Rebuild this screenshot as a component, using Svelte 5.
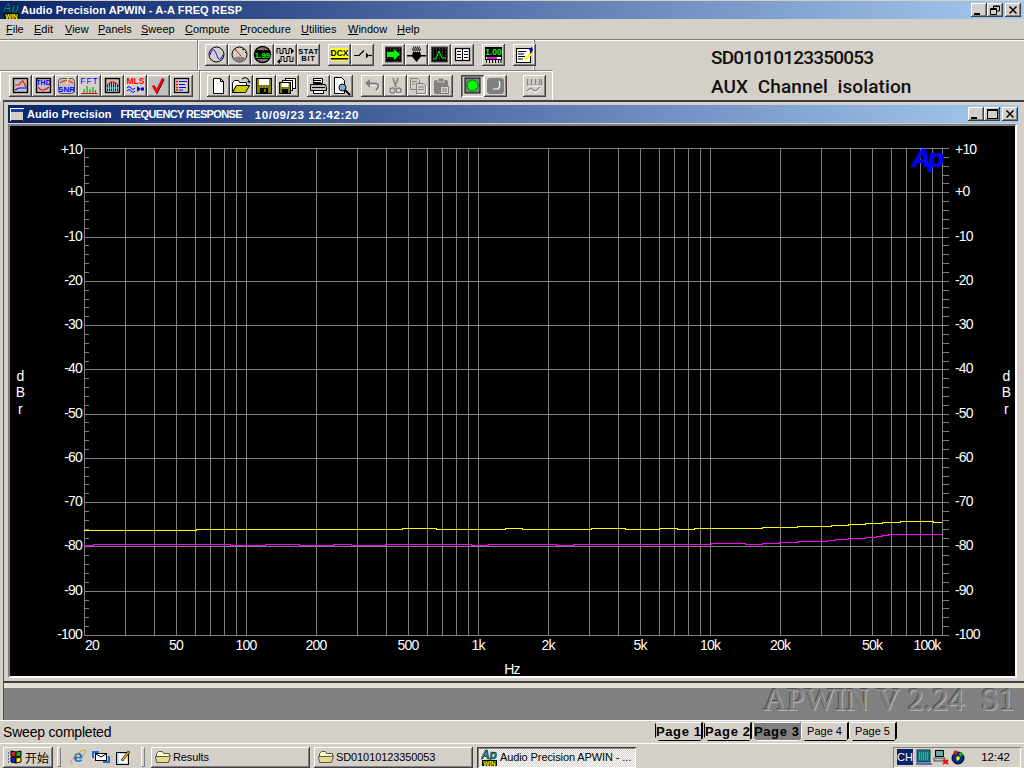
<script lang="ts">
  const menus = ["File", "Edit", "View", "Panels", "Sweep", "Compute", "Procedure", "Utilities", "Window", "Help"];

  const ln = (d: string, c = "#000", w = 1) => `<path d="${d}" fill="none" stroke="${c}" stroke-width="${w}"/>`;
  const fl = (d: string, c: string) => `<path d="${d}" fill="${c}"/>`;
  const tx = (s: string, x: number, y: number, c: string, size = 8, weight = "bold", extra = "") =>
    `<text x="${x}" y="${y}" fill="${c}" font-size="${size}" font-weight="${weight}" font-family="Liberation Sans" text-anchor="middle" ${extra}>${s}</text>`;
  const box = `<rect x="4.5" y="3.5" width="14" height="14" fill="#c0c0c0" stroke="#000" stroke-width="1.4"/>`;
  const darkDots = `<rect x="3.5" y="3" width="16" height="15" fill="#000" stroke="#555"/>` +
    `<path d="M5 5h13M5 8h13M5 11h13M5 14h13" stroke="#777" stroke-dasharray="1 2"/>`;

  const icons: Record<string, string> = {
    sine: `<circle cx="11.5" cy="10.5" r="7.5" fill="none" stroke="#000"/>` + ln("M5 11c2-7 4-7 6.5-.5s4 6.5 6.5 0", "#00f"),
    meter: `<circle cx="11.5" cy="10.5" r="7.5" fill="#d4d0c8" stroke="#000"/>` +
      fl("M5 14q6.5-3 13 0l-2 3q-4.500 2-9 0z", "#808080") + ln("M7 5l6 7", "#f00") + ln("M14 5l2 1M17 8l1 1", "#000"),
    dbm: `<ellipse cx="11.500" cy="10.5" rx="8" ry="8" fill="#808080" stroke="#000" stroke-width="1.500"/>` +
      `<rect x="4" y="6" width="15" height="9" fill="#000"/>` + tx("1.99", 11.5, 13.500, "#0f0", 8) + ln("M15 3l-3 4M9 15l-1 3", "#f00"),
    waves: ln("M3 9.500V4.500h3v5h3v-5h3v5h3v-5h2", "#000") + fl("M17 4l3 3-3 3z", "#000") + ln("M19 12.500v5h-3v-5h-3v5h-3v-5H7v5H5") + fl("M6 15l-3 2.500 3 2.500z", "#000"),
    stat: tx("STAT", 11.5, 9.500, "#000", 7.500, "bold", `letter-spacing=".5"`) + tx("BIT", 11.5, 17, "#000", 7.500, "bold", `letter-spacing=".8"`),
    dcx: `<rect x="3" y="4" width="17" height="13" fill="#ff0"/><path d="M3 5h17M3 7h17M3 9h17M3 11h17M3 13h17" stroke="#fff" stroke-dasharray="1 1"/>` +
      tx("DCX", 11.5, 12, "#000", 8.500) + `<rect x="3" y="14" width="17" height="1.500" fill="#000"/>`,
    switch: ln("M3 11.500h5l5-5", "#000", 1.200) + fl("M15 8.500l3 3-3 3z", "#000") + ln("M18 11.500h3", "#000", 1.200),
    arrow: darkDots + fl("M5 8h7V5l6 5.500-6 5.500v-3H5z", "#0f0"),
    funnel: `<path d="M8 3h7v2H8zM7 5h9v2H7z" fill="#808080"/><path d="M8 3h7M7 5h9M8 7h7" stroke="#000" stroke-dasharray="1 1"/>` +
      fl("M8 8h7l1 3h5v1.500h-5L11.500 18 7 12.500H2V11h5z", "#000"),
    scope: darkDots + ln("M5 15h3l3-8 3 7h4", "#0f0"),
    table: `<rect x="4.500" y="4.500" width="14" height="12" fill="#fff" stroke="#000" stroke-width="1.300"/>` +
      ln("M11.500 5v11M6 7.500h4M6 10.500h4M6 13.500h4M13 7.500h4M13 10.500h4M13 13.500h4"),
    level: `<rect x="3" y="3" width="17" height="9" fill="#000"/>` + tx("1.00", 11.5, 10.500, "#0f0", 8.500) +
      `<rect x="3.500" y="12.500" width="16" height="3" fill="#fff" stroke="#000"/><rect x="5" y="13" width="10" height="2" fill="#f0f"/>` +
      ln("M4.500 16v3M7.500 16v3M10.500 16v3M13.500 16v3M16.500 16v3M19 16v3"),
    notes: `<rect x="3.500" y="4.500" width="14" height="14" fill="#fff" stroke="#000"/>` + ln("M5 7.500h8M5 10h6M5 12.500h7M5 15h5") +
      fl("M11 15l6-6 2 2-6 5z", "#ff0") + fl("M16 5l3-2 1 3-2 3z", "#00a"),
    response: box + ln("M6 10h4l3-4h1l3 6", "#f00", 1.200) + ln("M6 15l4-2h8", "#00f", 1.200),
    thd: box + tx("THD", 11.5, 10, "#00f", 7) + ln("M6 12q2 3 5 3t6-3", "#f00", 1.200),
    snr: `<rect x="3.500" y="3.500" width="16" height="15" rx="3" fill="#c0c0c0" stroke="#555"/>` + ln("M5 8q6-5 13 0", "#f00") + ln("M13 3l-1 6", "#ff0", 1.500) + tx("SNR", 11.5, 17, "#00f", 8),
    fft: tx("FFT", 11.5, 9, "#00f", 8.500, "normal", `letter-spacing="1"`) + ln("M6 18v-4M9 18v-7M12 18v-4M15 18v-6M17.500 18v-3", "#0a0", 1.200) + ln("M3 18.500h17", "#f00"),
    bars: box + ln("M6.500 16v-6M8.500 16V8M10.500 16V7M12.500 16V7M14.500 16V8M16.500 16v-6", "#00f") + ln("M5 11q6-9 13 0", "#f00") + ln("M5 13h13", "#0ff"),
    mls: tx("MLS", 11.5, 9, "#f00", 8.500) + ln("M3 13q2-3 4 0t4 0M3 16q2-3 4 0t4 0", "#00f") + fl("M13 11l4 3-4 3z", "#00f") + `<rect x="17" y="12.500" width="3" height="3" fill="#00f"/>`,
    check: `<rect x="2" y="2" width="19" height="18" fill="#c0c0c0"/>` + ln("M6.500 11l3.500 6L16.500 4", "#000", 2.400) + ln("M6 10.500l3.500 6L16 3.500", "#f00", 2.400),
    list: `<rect x="4.500" y="3.500" width="14" height="14" fill="#d4d0c8" stroke="#000" stroke-width="1.300"/>` +
      ln("M6 6.500h2M6 9.500h2M6 12.500h2M6 15h2", "#f00", 1.400) + ln("M9 6.500h8M9 9.500h6M9 12.500h7M9 15h4", "#00f", 1.200),
    doc: `<path d="M6.500 3.500h7l3 3v12h-10z" fill="#fff" stroke="#000"/>` + ln("M13.500 3.500v3h3"),
    open: `<path d="M2.500 7.500l2-2h4l1 2h7v3h-10l-4 7z" fill="#fff" stroke="#000"/>` + `<path d="M6.500 10.500h13l-4 7H2.500z" fill="#cc0" stroke="#000"/>` +
      ln("M12 4q3-3 6 0l1 2") + fl("M17 6h3.500l-1 2.500z", "#000"),
    save: `<rect x="3.500" y="3.500" width="15" height="15" fill="#808000" stroke="#000"/><rect x="6" y="4" width="10" height="6" fill="#fff"/><rect x="7" y="13" width="8" height="5" fill="#000"/><rect x="11" y="14" width="2" height="3" fill="#808000"/>`,
    saveall: `<rect x="9.500" y="3.500" width="10" height="10" fill="#fff" stroke="#000"/><rect x="6.500" y="5.500" width="10" height="10" fill="#fff" stroke="#000"/>` +
      `<rect x="3.500" y="7.500" width="11" height="11" fill="#808000" stroke="#000"/><rect x="5.500" y="8" width="7" height="4" fill="#fff"/><rect x="6" y="14" width="6" height="4" fill="#000"/>`,
    print: `<path d="M6.500 3.500h9v5h-9z" fill="#fff" stroke="#000"/><path d="M3.500 9.500h15l1 3v3h-16z" fill="#c0c0c0" stroke="#000"/>` + ln("M5 12.500h13M7 5.500h7M7 7.500h7") +
      `<path d="M6.500 15.500h10v3h-10z" fill="#fff" stroke="#000"/>`,
    preview: `<path d="M4.500 2.500h7l3 3v13h-10z" fill="#fff" stroke="#000"/>` + `<circle cx="12.500" cy="12.500" r="3.500" fill="#8ac" stroke="#000"/>` + ln("M15 15l5 5", "#000", 2),
    undo: ln("M7.500 9.500h7q4 0 3 4l-2 3", "#fff", 2) + ln("M7 8.500h7q4 0 3 4l-2 3", "#808080", 2) + fl("M9 4v9L4 8z", "#808080"),
    cut: ln("M9 3l3 9M14 3l-3 9", "#808080", 1.500) + `<circle cx="8.500" cy="15.500" r="2.500" fill="none" stroke="#808080" stroke-width="1.300"/><circle cx="14.500" cy="15.500" r="2.500" fill="none" stroke="#808080" stroke-width="1.300"/>` + ln("M11 19h7", "#fff"),
    copy: `<path d="M3.500 3.500h7l2 2v9h-9z" fill="#d4d0c8" stroke="#808080"/><path d="M9.500 8.500h7l2 2v8h-9z" fill="#d4d0c8" stroke="#808080"/>` + ln("M5 6.500h5M5 9h3M11 12h6M11 14.500h6", "#808080") + ln("M19.500 11v8.500H11", "#fff"),
    paste: `<rect x="4" y="5" width="14" height="14" rx="2" fill="#808080"/><rect x="8" y="3" width="6" height="4" fill="#808080" stroke="#fff" stroke-width=".6"/>` +
      `<rect x="10.500" y="11.500" width="8" height="7" fill="#d4d0c8" stroke="#808080"/>` + ln("M12 14h5M12 16h5", "#808080"),
    lamp: `<rect x="4" y="3" width="15" height="15" fill="#808080" stroke="#000"/><circle cx="11.500" cy="10.500" r="5.500" fill="#0f0" stroke="#063"/>`,
    dark: `<rect x="3" y="3" width="17" height="16" rx="3" fill="#808080"/>` + ln("M15 6q2 5-1 8H9", "#fff", 1.200),
    chart: ln("M4.500 4v6h14V4M8.500 4v5M12.500 4v5M16.500 4v5", "#808080", 1.200) + ln("M4 16l4-3 3 3 3-1 4-4", "#808080", 1.200) + ln("M4 17.500l4-3 3 3 3-1 4-4M5 11h14", "#fff"),
  };

  const rowOne = [["sine", "meter", "dbm", "waves", "stat"], ["dcx", "switch"], ["arrow", "funnel", "scope", "table"], ["level"], ["notes"]];
  const rowTwoA = ["response", "thd", "snr", "fft", "bars", "mls", "check", "list"];
  const rowTwoB = [["doc", "open", "save", "saveall"], ["print", "preview"], ["undo", "cut", "copy", "paste"], ["lamp", "dark"]];
  const pressed = ["lamp"];

  const pages = [
    { label: "Page 1", bold: true },
    { label: "Page 2", bold: true },
    { label: "Page 3", bold: true, current: true },
    { label: "Page 4" },
    { label: "Page 5" },
  ];

  // plot scale
  const yAt = (i: number) => Math.round(148 + (i * 487) / 11) + 0.5;
  const xAt = (f: number) => Math.round(84 + 232 * Math.log10(f / 20)) + 0.5;

  const freqs: number[] = [];
  for (const d of [10, 100, 1000, 10000]) for (let m = 1; m < 10; m++) if (d * m >= 20) freqs.push(d * m);
  freqs.push(100000);

  const yLabels = ["+10", "+0", "-10", "-20", "-30", "-40", "-50", "-60", "-70", "-80", "-90", "-100"];
  const xLabels = [
    ["20", 92], ["50", 176], ["100", 246], ["200", 316], ["500", 408], ["1k", 478],
    ["2k", 548], ["5k", 640], ["10k", 710], ["20k", 780], ["50k", 872], ["100k", 927],
  ];

  const minor: number[] = [];
  for (let i = 0; i < 11; i++) for (let j = 1; j < 5; j++) minor.push(Math.round(148 + ((i + j / 5) * 487) / 11) + 0.5);

  function steps(pts: number[][]) {
    let d = `M84 ${pts[0][1] + 0.5}`;
    for (const [x, y] of pts) d += `V${y + 0.5}H${x}`;
    return d;
  }

  const yellow = steps([
    [196, 530], [402, 529], [436, 528], [505, 529], [522, 528], [591, 529], [625, 528], [659, 529],
    [677, 528], [694, 529], [762, 528], [797, 527], [831, 526], [848, 525], [865, 524], [882, 523],
    [900, 522], [933, 521], [942, 522],
  ]);
  const magenta = steps([
    [93, 545], [230, 544], [265, 545], [299, 544], [333, 545], [351, 544], [385, 545], [471, 544],
    [488, 545], [556, 544], [573, 545], [711, 544], [745, 543], [762, 544], [779, 543], [797, 542],
    [827, 541], [835, 540], [848, 539], [865, 538], [876, 537], [882, 536], [888, 535], [942, 534],
  ]);
</script>

{#snippet tool(name)}
  <div class="tbtn" class:pressed={pressed.includes(name)}>
    <svg viewBox="0 0 23 22" width="23" height="22">{@html icons[name]}</svg>
  </div>
{/snippet}

{#snippet logo()}
  <svg class="logo" viewBox="0 0 17 17" width="17" height="17">
    <text x="0" y="10" font-size="12" font-style="italic" font-weight="bold" font-family="Liberation Sans" fill="#0a8f8f" stroke="#000" stroke-width=".4">Ap</text>
    <rect x="1" y="11" width="15" height="6" fill="#000" />
    <text x="8.500" y="16.500" font-size="6.500" font-weight="bold" font-family="Liberation Sans" fill="#ff0" text-anchor="middle">WIN</text>
  </svg>
{/snippet}

{#snippet folder()}
  <svg viewBox="0 0 16 14" width="16" height="14">
    <path d="M1.500 3.500l2-2h4l1 2h6v3h-13z" fill="#ffc" stroke="#555" />
    <path d="M.5 6.500h12l3-1-2 7H1.500z" fill="#e8d98a" stroke="#555" />
  </svg>
{/snippet}

<div class="desktop">
  <header class="titlebar">
    {@render logo()}
    <span class="title">Audio Precision APWIN - A-A FREQ RESP</span>
    <div class="caption-btns">
      <div class="cbtn"><i class="min"></i></div>
      <div class="cbtn"><svg viewBox="0 0 10 10" width="10" height="10"><path d="M3.500 3V1h6v5H7M.5 3.500h6v6h-6zM.5 4.500h6M3.500 1.500h6" fill="none" stroke="#000" /></svg></div>
      <div class="cbtn close"><svg viewBox="0 0 10 10" width="10" height="10"><path d="M1.500 1.500l7 7M8.500 1.500l-7 7" stroke="#000" stroke-width="1.500" /></svg></div>
    </div>
  </header>

  <nav class="menubar">
    {#each menus as m}
      <span><u>{m[0]}</u>{m.slice(1)}</span>
    {/each}
  </nav>

  <section class="toolbars">
    <div class="bands">
      <div class="row">
        <div class="empty-band"></div>
        <div class="band first">
          {#each rowOne as group}
            <div class="group">{#each group as name}{@render tool(name)}{/each}</div>
          {/each}
        </div>
      </div>
      <div class="row second">
        <div class="band left">
          <div class="group">{#each rowTwoA as name}{@render tool(name)}{/each}</div>
        </div>
        <div class="band right">
          {#each rowTwoB as group}
            <div class="group">{#each group as name}{@render tool(name)}{/each}</div>
          {/each}
          <div class="group last">{@render tool("chart")}</div>
        </div>
      </div>
    </div>
    <div class="caption">
      <div class="serial">SD01010123350053</div>
      <div>AUX&nbsp; Channel&nbsp; isolation</div>
    </div>
  </section>

  <main class="mdi">
    <div class="child">
      <div class="child-title">
        <svg viewBox="0 0 14 13" width="14" height="13"><rect x=".5" y=".5" width="13" height="12" fill="#d4d0c8" stroke="#fff" /><rect x="1" y="1" width="12" height="3" fill="#1a3fa0" /><path d="M13.500 1v11.500H1" fill="none" stroke="#222" /></svg>
        <span class="t1">Audio Precision</span>
        <span class="t2">FREQUENCY RESPONSE</span>
        <span class="t3">10/09/23 12:42:20</span>
        <div class="child-btns">
          <div class="cbtn"><i class="min"></i></div>
          <div class="cbtn"><i class="max"></i></div>
          <div class="cbtn close"><svg viewBox="0 0 10 10" width="10" height="10"><path d="M1.500 1.500l7 7M8.500 1.500l-7 7" stroke="#000" stroke-width="1.500" /></svg></div>
        </div>
      </div>
      <div class="client">
        <svg class="plot" viewBox="10 126 1005 550" width="1005" height="550">
          <rect x="10" y="126" width="1005" height="550" fill="#000" />
          <g stroke="#808080" stroke-width="1" shape-rendering="crispEdges">
            {#each freqs as f}
              <line x1={xAt(f)} x2={xAt(f)} y1="148" y2="635" />
            {/each}
            {#each yLabels as _, i}
              <line x1="84" x2="949" y1={yAt(i)} y2={yAt(i)} />
            {/each}
            {#each minor as y}
              <line x1="84" x2="89" y1={y} y2={y} />
              <line x1="942" x2="949" y1={y} y2={y} />
            {/each}
          </g>
          <g fill="none" stroke-width="1" shape-rendering="crispEdges">
            <path d={yellow} stroke="#ffff00" />
            <path d={magenta} stroke="#ff00ff" />
          </g>
          <text class="ap" x="912" y="167">Ap</text>
          <g class="labels">
            {#each yLabels as label, i}
              <text x="82" y={yAt(i) + (i === 0 ? 5 : 3)} text-anchor="end">{label}</text>
              <text x="955" y={yAt(i) + (i === 0 ? 5 : 3)}>{label}</text>
            {/each}
            {#each xLabels as [label, x]}
              <text {x} y="650" text-anchor="middle">{label}</text>
            {/each}
            <text x="512" y="674" text-anchor="middle">Hz</text>
            <text x="20" y="381" text-anchor="middle">d</text>
            <text x="20" y="397" text-anchor="middle">B</text>
            <text x="20" y="414" text-anchor="middle">r</text>
            <text x="1006" y="381" text-anchor="middle">d</text>
            <text x="1006" y="397" text-anchor="middle">B</text>
            <text x="1006" y="414" text-anchor="middle">r</text>
          </g>
        </svg>
      </div>
    </div>
    <div class="version"><span>APWIN V 2.24&nbsp; S1</span></div>
  </main>

  <div class="statusbar">
    <span class="status">Sweep completed</span>
    <div class="tabs">
      {#each pages as p}
        <div class="tab" class:bold={p.bold} class:current={p.current}>{p.label}</div>
      {/each}
    </div>
  </div>

  <footer class="taskbar">
    <div class="task start">
      <svg viewBox="0 0 16 16" width="16" height="16">
        <path d="M1 4h2M1 7h2M1 10h2M1 13h2" stroke="#00a" stroke-dasharray="1 1" />
        <path d="M4 2l5 1v5l-5-1z" fill="#d22" stroke="#000" />
        <path d="M9 3l5-1v5l-5 1z" fill="#2a2" stroke="#000" />
        <path d="M4 8l5 1v5l-5-1z" fill="#22c" stroke="#000" />
        <path d="M9 9l5-1v5l-5 1z" fill="#ee0" stroke="#000" />
      </svg>
      <span>开始</span>
    </div>
    <i class="handle"></i>
    <div class="quick">
      <svg viewBox="0 0 16 16" width="16" height="16">
        <text x="8" y="13" font-size="17" font-weight="bold" font-family="Liberation Sans" fill="#1a6fd0" text-anchor="middle">e</text>
        <path d="M2 15Q-1 12 6 6T15 1q2 2-2 6" fill="none" stroke="#d8a020" />
      </svg>
      <svg viewBox="0 0 18 16" width="18" height="16">
        <rect x="3.500" y="4.500" width="11" height="7" fill="#fff" stroke="#000" />
        <path d="M4 5l5 3 5-3" fill="none" stroke="#000" />
        <path d="M1 9V3h6M17 7v6h-6" fill="none" stroke="#1a6fd0" stroke-width="2" />
      </svg>
      <svg viewBox="0 0 16 16" width="16" height="16">
        <rect x=".5" y="3.500" width="12" height="12" fill="#bde" stroke="#000" />
        <rect x="3" y="5" width="8" height="9" fill="#fff" />
        <path d="M5 11l7-9 2 1-7 9z" fill="#dda020" stroke="#000" stroke-width=".6" />
      </svg>
    </div>
    <i class="handle"></i>
    <div class="task app">{@render folder()}<span>Results</span></div>
    <div class="task app">{@render folder()}<span>SD01010123350053</span></div>
    <div class="task app active">{@render logo()}<span>Audio Precision APWIN - ...</span></div>
    <div class="tray">
      <span class="ch">CH</span>
      <svg viewBox="0 0 16 16" width="16" height="16"><rect x="1" y="1" width="13" height="12" fill="#0a7a7a" stroke="#0a3a5a" /><path d="M3 4h9M3 6h9M3 8h9M3 10h9" stroke="#8cc" stroke-dasharray="1 1" /><path d="M0 15h16" stroke="#00a" /></svg>
      <svg viewBox="0 0 16 16" width="16" height="16"><rect x="2.500" y="1.500" width="8" height="6" fill="#6aa" stroke="#000" /><rect x="1" y="9" width="11" height="3" fill="#c0c0c0" stroke="#000" stroke-width=".6" /><path d="M10 11l5 4M15 11l-5 4" stroke="#f00" stroke-width="2" /></svg>
      <svg viewBox="0 0 16 16" width="16" height="16"><circle cx="8" cy="9" r="6" fill="#0a2a8a" stroke="#000" /><path d="M3 3l3-2 2 3-3 2z" fill="#d22" /><path d="M9 4l3-1 1 3-3 2z" fill="#2a2" /><path d="M6 8l3-1 1 3-3 2z" fill="#ee0" /></svg>
      <span class="clock">12:42</span>
    </div>
  </footer>
</div>

<style>
  :global(body) {
    margin: 0;
    background: #d4d0c8;
  }

  .desktop {
    width: 1024px;
    height: 768px;
    display: flex;
    flex-direction: column;
    overflow: hidden;
    background: #d4d0c8;
    color: #000;
    font-family: "Liberation Sans", Arial, sans-serif;
    font-size: 11px;
  }

  .titlebar {
    height: 18px;
    margin-top: 1px;
    display: flex;
    align-items: center;
    padding-left: 3px;
    background: linear-gradient(90deg, #0a246a, #a6caf0);
    color: #fff;
  }

  .title {
    margin-left: 1px;
    font-size: 11px;
    font-weight: bold;
    letter-spacing: 0.08px;
  }

  .caption-btns {
    margin-left: auto;
    margin-right: 3px;
    display: flex;
  }

  .child-btns {
    margin-left: auto;
    margin-right: 1px;
    display: flex;
  }

  .cbtn {
    width: 16px;
    height: 14px;
    display: flex;
    align-items: center;
    justify-content: center;
    background: #d4d0c8;
    box-shadow: inset -1px -1px #404040, inset 1px 1px #fff, inset -2px -2px #808080;
  }

  .cbtn.close {
    margin-left: 2px;
  }

  .cbtn svg {
    display: block;
  }

  .min {
    width: 6px;
    height: 2px;
    background: #000;
    margin: 7px 5px 0 0;
  }

  .max {
    width: 9px;
    height: 7px;
    border: 1px solid #000;
    border-top-width: 2px;
  }

  .menubar {
    height: 20px;
    display: grid;
    grid-template-columns: 28px 31px 33px 43px 44px 55px 61px 47px 49px 40px;
    align-items: center;
    padding-left: 6px;
    font-size: 11px;
  }

  .toolbars {
    height: 61px;
    display: flex;
    flex: none;
  }

  .bands {
    width: 553px;
    flex: none;
  }

  .row {
    height: 30px;
    display: flex;
    border-top: 1px solid #808080;
    box-shadow: inset 0 1px #fff;
  }

  .row.second {
    border-right: 1px solid #fff;
  }

  .empty-band {
    width: 197px;
    flex: none;
  }

  .band {
    display: flex;
    gap: 8px;
    padding-top: 4px;
    box-sizing: border-box;
    height: 30px;
  }

  .band.first {
    flex: none;
    width: 338px;
    padding-left: 7px;
    border-left: 1px solid #808080;
    border-right: 1px solid #808080;
    box-shadow: inset 1px 0 #fff, inset -1px 0 #fff;
  }

  .band.left {
    width: 199px;
    padding-left: 9px;
    flex: none;
    box-shadow: inset 1px 0 #fff;
  }

  .band.right {
    padding-left: 7px;
    border-left: 1px solid #808080;
    box-shadow: inset 1px 0 #fff;
  }

  .group {
    display: flex;
  }

  .group.last {
    margin-left: 8px;
  }

  .tbtn {
    width: 23px;
    height: 22px;
    flex: none;
    box-shadow: inset -1px -1px #404040, inset 1px 1px #fff, inset -2px -2px #808080;
  }

  .tbtn.pressed {
    box-shadow: inset 1px 1px #404040, inset -1px -1px #fff, inset 2px 2px #808080;
  }

  .tbtn svg {
    display: block;
  }

  .caption {
    flex: 1;
    border-top: 1px solid #808080;
    box-shadow: inset 0 1px #fff;
    padding: 3px 0 0 158px;
    font-family: Roboto, "Liberation Sans", sans-serif;
    font-size: 19px;
    font-weight: 500;
    line-height: 29px;
    color: #111;
    white-space: nowrap;
    letter-spacing: 0.1px;
  }

  .serial {
    letter-spacing: -0.8px;
  }

  .mdi {
    flex: 1;
    display: flex;
    flex-direction: column;
    margin-left: 3px;
    background: #808080;
    border-top: 2px solid #404040;
    border-left: 1px solid #555;
    min-height: 0;
  }

  .child {
    flex: none;
    box-sizing: border-box;
    height: 581px;
    padding: 3px 5px 0 4px;
    background: #d4d0c8;
    border-bottom: 2px solid #404040;
    box-shadow: 0 5px 0 #e4e0d8;
    margin-bottom: 5px;
  }

  .child-title {
    height: 18px;
    display: flex;
    align-items: center;
    padding-left: 2px;
    margin-bottom: 1px;
    background: linear-gradient(90deg, #0a246a, #a6caf0);
    color: #fff;
    font-size: 11px;
    font-weight: bold;
  }

  .t1 {
    margin-left: 3px;
    letter-spacing: 0.05px;
  }

  .t2 {
    margin-left: 9px;
    letter-spacing: -0.65px;
  }

  .t3 {
    margin-left: 13px;
    font-size: 11.6px;
    letter-spacing: 0.55px;
  }

  .client {
    width: 1005px;
    height: 550px;
    border-style: solid;
    border-width: 2px;
    border-color: #808080 #fff #fff #808080;
  }

  .plot {
    display: block;
  }

  .labels text {
    fill: #fff;
    font-family: "Liberation Sans", sans-serif;
    font-size: 14px;
    letter-spacing: -0.8px;
  }

  .ap {
    fill: #0000ff;
    stroke: #0000ff;
    stroke-width: 0.7px;
    font-family: "Liberation Sans", sans-serif;
    font-size: 26px;
    font-weight: bold;
    font-style: italic;
    letter-spacing: -2.5px;
  }

  .version {
    flex: 1;
    min-height: 0;
    text-align: right;
    padding-right: 9px;
    font-family: "Liberation Serif", serif;
    font-size: 32px;
    line-height: 22px;
    letter-spacing: 0.2px;
    color: #808080;
    text-shadow: 1px 1px 0 #b4b4b4, -1px -1px 0 #505050;
    white-space: nowrap;
  }

  .statusbar {
    height: 23px;
    flex: none;
    display: flex;
    box-sizing: border-box;
    border-top: 1px solid #fff;
  }

  .status {
    width: 655px;
    flex: none;
    padding-left: 3px;
    box-sizing: border-box;
    font-size: 14px;
    line-height: 23px;
    letter-spacing: -0.2px;
  }

  .tabs {
    display: flex;
    padding-top: 1px;
  }

  .tab {
    width: 48px;
    height: 19px;
    box-sizing: border-box;
    text-align: center;
    font-size: 11px;
    line-height: 17px;
    background: #d4d0c8;
    border-top: 1px solid #fff;
    border-left: 1px solid #fff;
    border-right: 2px solid #000;
    border-bottom: 1px solid #000;
    clip-path: polygon(0 2px, 2px 0, 100% 0, 100% calc(100% - 3px), calc(100% - 3px) 100%, 4px 100%, 0 calc(100% - 4px));
  }

  .tab.bold {
    margin-right: 1px;
    border-left-color: #000;
    font-size: 13px;
    font-weight: bold;
    letter-spacing: 0.6px;
    white-space: nowrap;
  }

  .tab.current {
    margin-right: 0;
    background: #808080;
    border-bottom-color: #fff;
    border-left-color: #fff;
    border-right-color: #808080;
  }

  .taskbar {
    height: 25px;
    flex: none;
    box-sizing: border-box;
    display: flex;
    align-items: center;
    gap: 4px;
    padding: 2px 3px 0;
    border-top: 1px solid #fff;
  }

  .task {
    height: 21px;
    box-sizing: border-box;
    display: flex;
    align-items: center;
    background: #d4d0c8;
    box-shadow: inset -1px -1px #404040, inset 1px 1px #fff, inset -2px -2px #808080;
  }

  .start {
    width: 50px;
    flex: none;
    padding-left: 4px;
    font-family: "Noto Sans CJK SC", sans-serif;
    font-size: 12px;
    gap: 2px;
  }

  .app {
    width: 159px;
    flex: none;
    padding-left: 4px;
    font-size: 11px;
    gap: 2px;
    white-space: nowrap;
    overflow: hidden;
    letter-spacing: -0.1px;
  }

  .active {
    box-shadow: inset 1px 1px #404040, inset -1px -1px #fff, inset 2px 2px #808080;
    background-color: #ece9e2;
    background-image: repeating-conic-gradient(#d4d0c8 0 25%, #fff 0 50%);
    background-size: 2px 2px;
    letter-spacing: -0.1px;
  }

  .handle {
    width: 2px;
    height: 18px;
    flex: none;
    border: 1px solid #808080;
    border-top-color: #fff;
    border-left-color: #fff;
  }

  .quick {
    width: 72px;
    flex: none;
    display: flex;
    align-items: center;
    justify-content: space-between;
    padding: 0 5px;
    box-sizing: border-box;
  }

  .quick + .handle {
    margin-right: 2px;
  }

  .quick svg {
    display: block;
  }

  .tray {
    margin-left: auto;
    width: 128px;
    height: 21px;
    box-sizing: border-box;
    display: flex;
    align-items: center;
    gap: 1px;
    padding-left: 4px;
    box-shadow: inset 1px 1px #808080, inset -1px -1px #fff;
  }

  .ch {
    width: 16px;
    height: 16px;
    margin-right: 2px;
    background: #0a246a;
    color: #fff;
    font-size: 11px;
    line-height: 16px;
    text-align: center;
  }

  .clock {
    margin-left: auto;
    margin-right: 11px;
    font-size: 11.5px;
  }

  .logo {
    display: block;
    flex: none;
  }
</style>
